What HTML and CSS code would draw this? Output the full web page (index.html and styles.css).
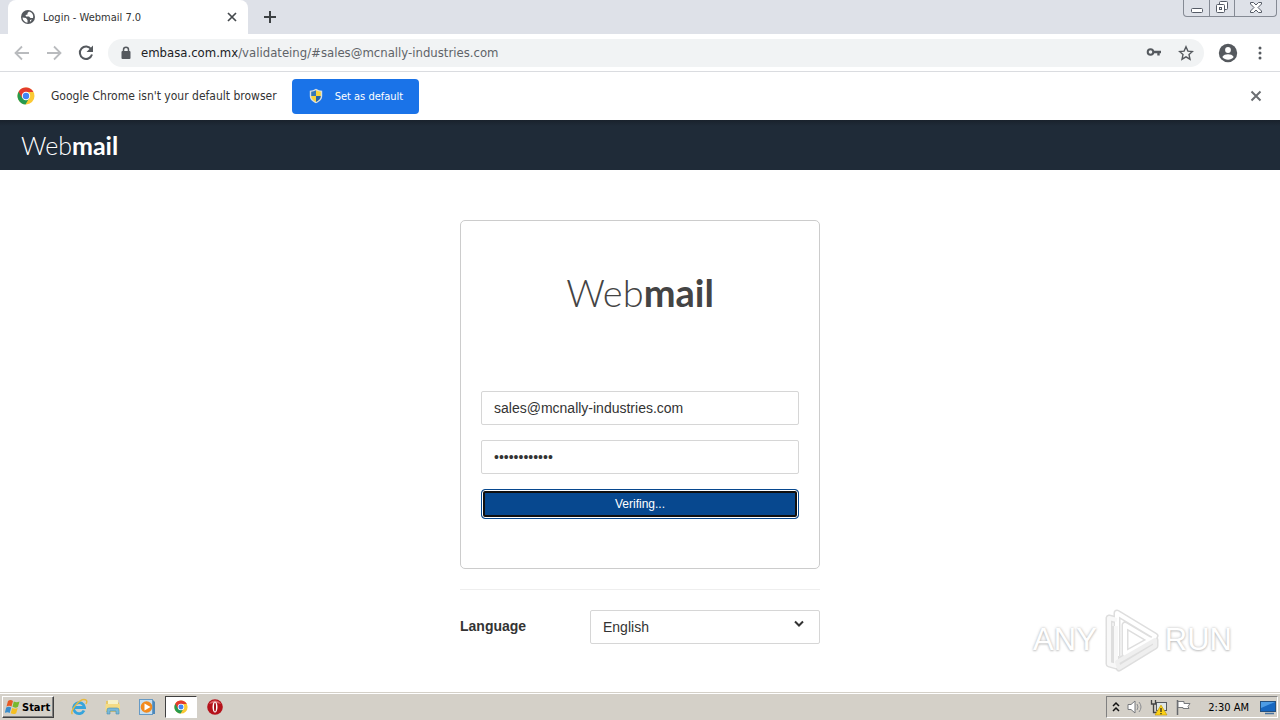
FILE: index.html
```html
<!DOCTYPE html>
<html lang="en">
<head>
  <meta charset="UTF-8" />
  <meta name="viewport" content="width=device-width, initial-scale=1.0"/>
  <title>Login - Webmail 7.0</title>
  <link rel="stylesheet" href="styles.css">
</head>
<body>

<!-- Tab strip -->
<div class="tab-strip">
  <div class="tab">
    <svg width="16" height="16" viewBox="0 0 16 16">
      <circle cx="8" cy="8" r="7" fill="#55595e"/>
      <path d="M2.5 8.5L6 9l1.500 2v2.800C4.800 13.500 2.600 11.300 2.500 8.500zM9 2.500L7.500 4v1.500L5.500 6l.5 1.500h3L10.500 9H13c.8-2.500-.5-5.500-4-6.500zM10 11l2-.5-2 2.500z" fill="#fff"/>
    </svg>
    <span class="tab-title">Login - Webmail 7.0</span>
    <button class="icon-btn" aria-label="Close tab">
      <svg width="16" height="16" viewBox="0 0 16 16"><path d="M4 4l8 8M12 4l-8 8" stroke="#45494d" stroke-width="1.700"/></svg>
    </button>
  </div>
  <button class="icon-btn new-tab" aria-label="New tab">
    <svg width="16" height="16" viewBox="0 0 16 16"><path d="M8 2v12M2 8h12" stroke="#3c4043" stroke-width="2"/></svg>
  </button>
  <div class="window-controls">
    <button aria-label="Minimize"><svg width="14" height="14" viewBox="0 0 14 14"><rect x="1.500" y="8.500" width="11" height="4" rx="1" fill="#fff" stroke="#555b66"/></svg></button>
    <button aria-label="Restore"><svg width="14" height="14" viewBox="0 0 14 14" fill="#fff" stroke="#555b66"><rect x="4.500" y="1.500" width="8" height="8" rx="1"/><rect x="1.500" y="4.500" width="8" height="8" rx="1"/><rect x="4.500" y="7.500" width="2" height="2"/></svg></button>
    <button class="wide" aria-label="Close"><svg width="14" height="14" viewBox="0 0 14 14"><path d="M1.500 2.500h3L7 5l2.500-2.500h3v1.500L9 7.500l3.500 3.500v1.500h-3L7 10l-2.500 2.500h-3V11L5 7.500 1.500 4z" fill="#fff" stroke="#555b66"/></svg></button>
  </div>
</div>

<!-- Toolbar -->
<div class="toolbar">
  <button class="icon-btn" aria-label="Back"><svg width="20" height="20" viewBox="0 0 20 20"><path d="M17 10H4M10 3.500L3.500 10l6.500 6.500" fill="none" stroke="#b9bbbe" stroke-width="1.800"/></svg></button>
  <button class="icon-btn" aria-label="Forward"><svg width="20" height="20" viewBox="0 0 20 20"><path d="M3 10h13M10 3.500l6.500 6.500-6.500 6.500" fill="none" stroke="#b9bbbe" stroke-width="1.800"/></svg></button>
  <button class="icon-btn" aria-label="Reload"><svg width="20" height="20" viewBox="0 0 20 20"><path d="M15.200 6.200A6.200 6.200 0 1 0 16 11.500" fill="none" stroke="#55595e" stroke-width="2"/><path d="M17 2.500V9h-6.500z" fill="#55595e"/></svg></button>
  <div class="address-bar">
    <svg width="12" height="14" viewBox="0 0 12 14"><rect x="1.500" y="5" width="9" height="8" rx="1" fill="#55595e"/><path d="M3.500 6V3.800a2.500 2.500 0 0 1 5 0V6" fill="none" stroke="#55595e" stroke-width="1.500"/></svg>
    <span class="url"><span class="host">embasa.com.mx</span>/validateing/#sales@mcnally-industries.com</span>
    <button class="icon-btn" aria-label="Passwords"><svg width="16" height="16" viewBox="0 0 16 16"><circle cx="4.500" cy="7" r="2.800" fill="none" stroke="#55595e" stroke-width="2"/><path d="M7 7h8M12.500 7v3.500" stroke="#55595e" stroke-width="2.400"/></svg></button>
    <button class="icon-btn" aria-label="Bookmark"><svg width="16" height="16" viewBox="0 0 16 16"><path d="M8 1.800l1.900 4.300 4.600.4-3.500 3.100 1 4.600-4-2.400-4 2.400 1-4.600-3.500-3.100 4.600-.4z" fill="none" stroke="#55595e" stroke-width="1.400"/></svg></button>
  </div>
  <button class="icon-btn" aria-label="Profile"><svg width="20" height="20" viewBox="0 0 20 20"><circle cx="10" cy="10" r="9.200" fill="#55595e"/><circle cx="10" cy="7" r="2.900" fill="#fff"/><path d="M4.300 14c1-2 3.500-2.700 5.700-2.700s4.700.7 5.700 2.700c-2.800 3.600-8.600 3.600-11.400 0z" fill="#fff"/></svg></button>
  <button class="icon-btn" aria-label="Menu"><svg width="16" height="16" viewBox="0 0 16 16" fill="#55595e"><circle cx="8" cy="3" r="1.500"/><circle cx="8" cy="8" r="1.500"/><circle cx="8" cy="13" r="1.500"/></svg></button>
</div>

<!-- Default browser bar -->
<div class="info-bar">
  <svg width="18" height="18" viewBox="0 0 18 18">
    <circle cx="9" cy="9" r="8.500" fill="#fbc934"/>
    <path d="M9 9L1.600 4.800A8.500 8.500 0 0 0 8.500 17.500L12.500 10.500z" fill="#269a4e"/>
    <path d="M9 9L5.200 11.200 1.600 4.800A8.500 8.500 0 0 1 16.400 5H9z" fill="#e33b2e"/>
    <circle cx="9" cy="9" r="4.200" fill="#fff"/><circle cx="9" cy="9" r="3.200" fill="#4285f4"/>
  </svg>
  <span class="info-text">Google Chrome isn't your default browser</span>
  <button class="default-btn">
    <svg width="16" height="16" viewBox="0 0 16 16"><path d="M8 .8C6 2.200 4 2.500 1.800 2.700V8c0 3.500 3 6 6.200 7.300C11.200 14 14.200 11.500 14.200 8V2.700C12 2.500 10 2.200 8 .8z" fill="#d9dfdf"/><path d="M8 2.300C6.500 3.200 5 3.600 3.200 3.800V8H8z" fill="#3478b8"/><path d="M8 2.300c1.500.9 3 1.300 4.800 1.500V8H8zM3.200 8c0 2.700 2 4.700 4.800 5.900V8z" fill="#f7d43b"/><path d="M8 13.900c2.800-1.200 4.800-3.200 4.800-5.900H8z" fill="#2565a8"/></svg>
    Set as default
  </button>
  <button class="icon-btn info-close" aria-label="Dismiss"><svg width="16" height="16" viewBox="0 0 16 16"><path d="M3.500 3.500l9 9M12.500 3.500l-9 9" stroke="#6b6e72" stroke-width="2"/></svg></button>
</div>

<!-- Page -->
<header class="header">
  <div class="logo">Web<b>mail</b></div>
</header>

<main class="content">
  <form class="login-box">
    <h1 class="logo logo-big">Web<b>mail</b></h1>
    <input class="field" type="email" aria-label="Email" value="sales@mcnally-industries.com">
    <input class="field" type="password" aria-label="Password" value="123456789012">
    <button class="login-btn" type="button">Verifing...</button>
  </form>
  <div class="language">
    <label for="lang">Language</label>
    <div class="select-wrap">
      <select id="lang" class="field">
        <option>English</option>
      </select>
      <svg class="chevron" width="10" height="8" viewBox="0 0 10 8"><path d="M1 1.500l4 4 4-4" fill="none" stroke="#333" stroke-width="2"/></svg>
    </div>
  </div>

  <div class="watermark">
    <span>ANY</span>
    <svg width="60" height="64" viewBox="0 0 60 64" fill="none" stroke-linejoin="round">
      <g stroke="#dedede" stroke-width="7"><path d="M16 48V5l38 23-3 5-27-16v29l27-15"/><path d="M16 12l-8-2v46l7 2V18M16 54l38-22v6L18 60z"/></g>
      <g stroke="#fff" stroke-width="4"><path d="M16 48V5l38 23-3 5-27-16v29l27-15"/><path d="M16 12l-8-2v46l7 2V18" stroke="#f8f8f8"/><path d="M16 54l38-22v6L18 60z" stroke="#efefef"/></g>
    </svg>
    <span>RUN</span>
  </div>
</main>

<!-- Taskbar -->
<footer class="taskbar">
  <button class="start-btn">
    <svg width="16" height="16" viewBox="0 0 16 16"><path d="M3 2c2-1.500 3.500-1 5 0L6.500 7.500c-1.500-1-3-1.200-5 0z" fill="#e75a24"/><path d="M8.800 2.400c2 1 3.500 1.200 5.700.1L13 7.800c-2 1.200-3.500 1-5.500 0z" fill="#78b82e"/><path d="M1.200 8.500c2-1.200 3.500-1 5 0L4.700 14c-1.500-1-3-1.200-5 0z" fill="#398dcc"/><path d="M7.200 8.900c2 1 3.500 1.100 5.500 0l-1.500 5.300c-2 1.200-3.500 1-5.500 0z" fill="#f5bf21"/></svg>
    Start
  </button>
  <div class="apps">
    <button class="app" aria-label="Internet Explorer"><svg width="18" height="18" viewBox="0 0 18 18" fill="none"><path d="M14 12.500A5.500 5.500 0 1 1 14.500 9.500H4" stroke="#36a4dc" stroke-width="2.800"/><path d="M2.500 16C-1 14 10-1 16 2c1.500.8.500 3 0 4" stroke="#e7b93e" stroke-width="1.400"/></svg></button>
    <button class="app" aria-label="Explorer"><svg width="18" height="18" viewBox="0 0 18 18"><path d="M2 3h5l1 1.500h7V14H2z" fill="#e6c768"/><path d="M4 2h10v4H4z" fill="#f7f2c7"/><path d="M1.500 6h14.500v7H1.500z" fill="#f5dc83"/><path d="M3 16v-4q0-2 2-2h8q2 0 2 2v4h-3v-3H6v3z" fill="#7ab9d8" stroke="#488eb3" stroke-width=".6"/></svg></button>
    <button class="app" aria-label="Media Player"><svg width="18" height="18" viewBox="0 0 18 18"><rect x="1.500" y="1.500" width="13" height="15" fill="#c6dff1" stroke="#669ac5"/><path d="M15 2v14h2V4z" fill="#4b87b9"/><circle cx="8.500" cy="9" r="5.800" fill="#f28a1d"/><path d="M6.500 5.500v7l6-3.500z" fill="#fff"/></svg></button>
    <button class="app active" aria-label="Chrome">
      <svg width="14" height="14" viewBox="0 0 18 18"><circle cx="9" cy="9" r="8.500" fill="#fbc934"/><path d="M9 9L1.600 4.800A8.500 8.500 0 0 0 8.500 17.500L12.500 10.500z" fill="#269a4e"/><path d="M9 9L5.200 11.200 1.600 4.800A8.500 8.500 0 0 1 16.400 5H9z" fill="#e33b2e"/><circle cx="9" cy="9" r="4.200" fill="#fff"/><circle cx="9" cy="9" r="3.200" fill="#4285f4"/></svg>
    </button>
    <button class="app" aria-label="Opera"><svg width="18" height="18" viewBox="0 0 18 18"><circle cx="9" cy="9" r="7.800" fill="#b5121b"/><path d="M3 6a7 7 0 0 1 12 0q-6-2-12 0z" fill="#dc6268"/><ellipse cx="9" cy="9" rx="2.500" ry="5.500" fill="#fff"/><ellipse cx="9" cy="9" rx="1" ry="4.500" fill="#a30e17"/></svg></button>
  </div>
  <div class="tray">
    <svg width="8" height="12" viewBox="0 0 8 12"><path d="M1 5l3-3 3 3M1 10l3-3 3 3" fill="none" stroke="#111" stroke-width="1.500"/></svg>
    <svg width="18" height="18" viewBox="0 0 18 18"><path d="M2 6.500h3L9 3v12l-4-3.500H2z" fill="#fff" stroke="#77797c"/><path d="M11 6q2 3 0 6M13 4q4 5 0 10" fill="none" stroke="#8a8c90"/></svg>
    <svg width="18" height="18" viewBox="0 0 18 18"><rect x="6.500" y="4.500" width="10" height="8" fill="#dfe6e6" stroke="#55595e"/><path d="M1.500 2v4h4V2M3.500 6v8.500H8" fill="none" stroke="#444" stroke-width="1.300"/><path d="M11 7l6 10H5z" fill="#fbd116" stroke="#c29500" stroke-width=".6"/><path d="M11 10v4M11 15v1.200" stroke="#222" stroke-width="1.200"/></svg>
    <svg width="18" height="18" viewBox="0 0 18 18"><path d="M3.500 2v15" stroke="#66686c" stroke-width="1.500"/><path d="M4 3.500h6V5.500h6l-2 3 1 2H9v-1H4z" fill="#fff" stroke="#77797c"/></svg>
    <span class="clock">2:30 AM</span>
    <svg width="16" height="16" viewBox="0 0 16 16"><rect x=".5" y="2.500" width="15" height="10" fill="#1767c0" stroke="#24507f"/><path d="M1 3h14L1 9z" fill="#4d9ce5"/><path d="M5 14.500h9" stroke="#46729f" stroke-width="1.500"/></svg>
  </div>
</footer>

</body>
</html>
```
FILE: styles.css
```css
* {
  margin: 0;
  padding: 0;
  box-sizing: border-box;
}

body {
  min-height: 100vh;
  display: flex;
  flex-direction: column;
  background: #fff;
  color: #333;
  font-family: "Liberation Sans", Arial, sans-serif;
  font-size: 14px;
}

svg {
  display: block;
  flex: none;
}

button {
  border: none;
  background: none;
  font: inherit;
}

.icon-btn {
  display: flex;
  flex: none;
}

.tab-strip, .toolbar, .info-bar, .taskbar {
  font-family: "DejaVu Sans Condensed", "DejaVu Sans", sans-serif;
}

/* Browser */
.tab-strip {
  display: flex;
  align-items: center;
  height: 34px;
  padding-left: 8px;
  background: #dee1e8;
}

.tab {
  display: flex;
  align-items: center;
  gap: 7px;
  width: 240px;
  height: 34px;
  padding: 0 8px 0 12px;
  background: #fff;
  border-radius: 8px 8px 0 0;
  font-size: 11px;
}

.tab-title {
  flex: 1;
}

.new-tab {
  margin-left: 14px;
}

.window-controls {
  display: flex;
  align-self: flex-start;
  margin: 0 3px 0 auto;
  border: 1px solid #858a94;
  border-top: none;
  border-radius: 0 0 4px 4px;
}

.window-controls button {
  display: flex;
  justify-content: center;
  width: 25px;
  height: 16px;
}

.window-controls button + button {
  border-left: 1px solid #858a94;
}

.window-controls .wide {
  width: 42px;
}

.toolbar {
  display: flex;
  align-items: center;
  gap: 12px;
  height: 38px;
  padding: 0 14px 0 12px;
  border-bottom: 1px solid #dadce0;
}

.address-bar {
  flex: 1;
  display: flex;
  align-items: center;
  gap: 16px;
  height: 28px;
  margin-right: 2px;
  padding: 0 10px 0 12px;
  border-radius: 14px;
  background: #f1f3f4;
}

.toolbar > :last-child {
  margin-left: 2px;
  margin-right: -2px;
}

.url {
  flex: 1;
  margin-left: -7px;
  font-size: 13px;
  color: #5f6368;
}

.host {
  color: #202124;
}

.info-bar {
  display: flex;
  align-items: center;
  height: 48px;
  padding: 0 16px 0 17px;
  font-size: 12px;
}

.info-text {
  margin: 0 15px 0 16px;
}

.default-btn {
  display: flex;
  align-items: center;
  gap: 11px;
  height: 35px;
  padding: 0 16px;
  border-radius: 4px;
  background: #1a73e8;
  color: #fff;
  font-size: 11px;
}

.info-close {
  margin-left: auto;
}

/* Webmail */
.header {
  display: flex;
  align-items: center;
  height: 50px;
  padding: 0 21px;
  background: linear-gradient(#19222c, #1f2b38 6px);
  color: #fff;
}

.logo {
  font-family: Lato, sans-serif;
  font-weight: 300;
  font-size: 25px;
  line-height: 48px;
}

.logo b {
  font-weight: 700;
}

.content {
  flex: 1;
  position: relative;
  padding-top: 50px;
}

.login-box {
  display: flex;
  flex-direction: column;
  gap: 15px;
  width: 360px;
  margin: 0 auto;
  padding: 47px 20px 49px;
  border: 1px solid #ccc;
  border-radius: 5px;
}

.logo-big {
  margin-bottom: 60px;
  font-size: 38px;
  text-align: center;
  color: #444;
}

.field {
  width: 100%;
  height: 34px;
  padding: 0 12px;
  border: 1px solid #d6d6d6;
  border-radius: 2px;
  background: #fff;
  color: #333;
  font-family: inherit;
  font-size: 14px;
}

.login-btn {
  height: 30px;
  border: 1px solid #07488f;
  border-radius: 4px;
  background: #07488f;
  box-shadow: inset 0 0 0 1px #fff, inset 0 0 0 3px #101010;
  color: #fff;
  font-size: 12px;
}

.language {
  display: flex;
  justify-content: space-between;
  width: 360px;
  margin: 20px auto;
  padding-top: 20px;
  border-top: 1px solid #eee;
}

.language label {
  line-height: 32px;
  font-weight: bold;
}

.select-wrap {
  position: relative;
  width: 230px;
}

select.field {
  appearance: none;
}

.chevron {
  position: absolute;
  top: 10px;
  right: 16px;
  pointer-events: none;
}

.watermark {
  position: absolute;
  right: 48px;
  bottom: 20px;
  display: flex;
  align-items: center;
  gap: 4px;
  color: #fff;
  font-family: "Liberation Sans", Arial, sans-serif;
  font-size: 31px;
  text-shadow: 0 0 3px #bbb, 0 1px 2px #ccc;
}

/* Taskbar */
.taskbar {
  display: flex;
  align-items: center;
  height: 28px;
  padding: 1px 2px 0;
  border-top: 1px solid #d4d0c8;
  background: #d4d0c8;
  box-shadow: inset 0 1px #fff;
  color: #000;
  font-size: 11px;
}

.start-btn {
  display: flex;
  align-items: center;
  gap: 1px;
  height: 22px;
  padding: 0 3px 0 2px;
  border: 1px solid;
  border-color: #fff #404040 #404040 #fff;
  box-shadow: inset -1px -1px #808080;
  font-weight: bold;
}

.apps {
  display: flex;
  gap: 2px;
  margin-left: 9px;
}

.app {
  display: flex;
  align-items: center;
  justify-content: center;
  width: 32px;
  height: 22px;
}

.app.active {
  border: 1px solid;
  border-color: #404040 #fff #fff #404040;
  background: #fff;
}

.tray {
  display: flex;
  align-items: center;
  gap: 6px;
  height: 22px;
  margin-left: auto;
  padding: 0 1px 0 5px;
  border: 1px solid;
  border-color: #808080 #fff #fff #808080;
}

.clock {
  margin: 0 5px 0 10px;
}
```
